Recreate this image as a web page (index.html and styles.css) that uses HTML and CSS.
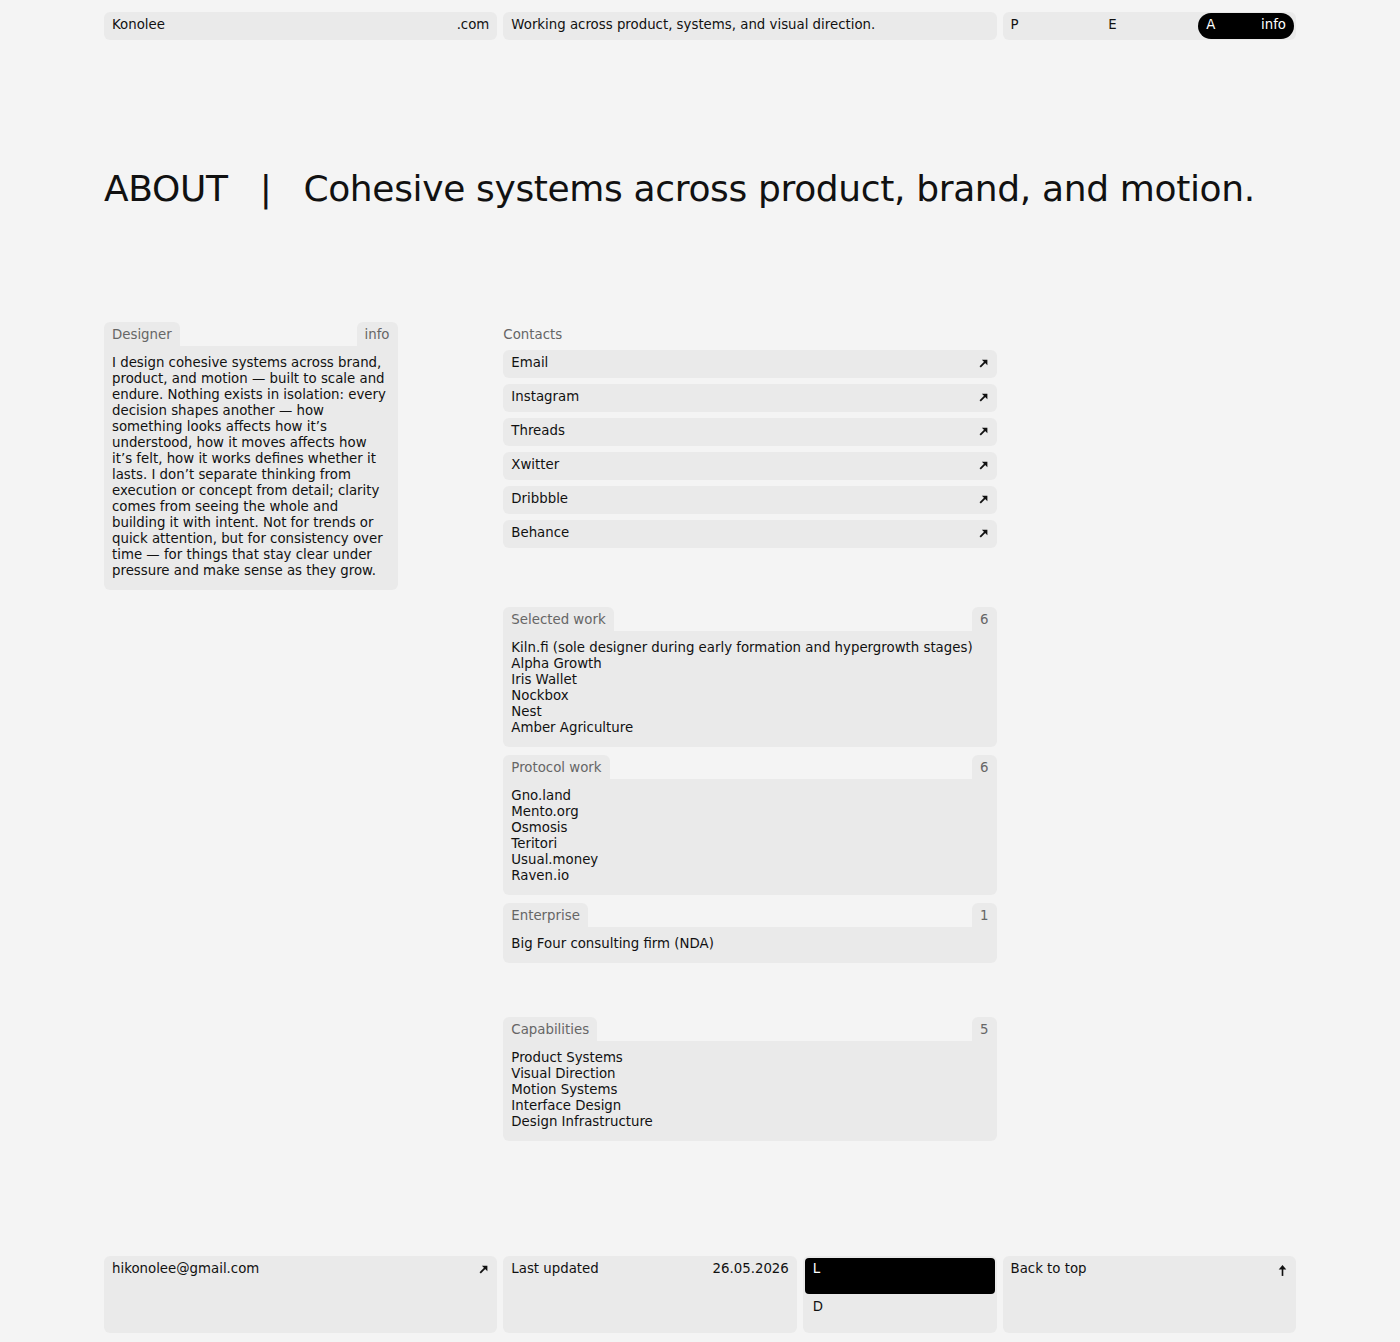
FILE: index.html
```html
<!DOCTYPE html>
<html lang="en">

<head>
    <meta charset="UTF-8" />
    <meta name="viewport" content="width=device-width, initial-scale=1.0" />
    <title>Konolee :: About</title>
    <link rel="stylesheet" href="styles.css">
</head>

<body>
    <div class="page">
        <header class="top-bar">
            <div class="bar-item span-4">
                <span>Konolee</span>
                <span>.com</span>
            </div>
            <div class="bar-item span-5">
                <span>Working across product, systems, and visual direction.</span>
            </div>
            <nav class="bar-nav span-3">
                <a class="nav-item" href="#">P</a>
                <a class="nav-item" href="#">E</a>
                <a class="nav-item active" href="#"><span>A</span><span>info</span></a>
            </nav>
        </header>

        <h1 class="headline">
            <span>ABOUT</span>
            <span>|</span>
            <span>Cohesive systems across product, brand, and motion.</span>
        </h1>

        <main class="main-grid">
            <section class="card span-3">
                <div class="card-head">
                    <span class="tab">Designer</span>
                    <span class="tab">info</span>
                </div>
                <div class="card-body">
                    I design cohesive systems across brand, product, and motion — built to scale and endure. Nothing exists in isolation: every decision shapes another — how something looks affects how it’s understood, how it moves affects how it’s felt, how it works defines whether it lasts. I don’t separate thinking from execution or concept from detail; clarity comes from seeing the whole and building it with intent. Not for trends or quick attention, but for consistency over time — for things that stay clear under pressure and make sense as they grow.
                </div>
            </section>

            <div class="right-col">
                <section class="contacts">
                    <div class="section-label">Contacts</div>
                    <div class="contact-list">
                        <a class="contact-row" href="#"><span>Email</span><svg class="arrow" viewBox="0 0 10 10"><path d="M2 8 L7 3" /><path class="head" d="M3.5 1.5 H8.5 V6.5 Z" /></svg></a>
                        <a class="contact-row" href="#"><span>Instagram</span><svg class="arrow" viewBox="0 0 10 10"><path d="M2 8 L7 3" /><path class="head" d="M3.5 1.5 H8.5 V6.5 Z" /></svg></a>
                        <a class="contact-row" href="#"><span>Threads</span><svg class="arrow" viewBox="0 0 10 10"><path d="M2 8 L7 3" /><path class="head" d="M3.5 1.5 H8.5 V6.5 Z" /></svg></a>
                        <a class="contact-row" href="#"><span>Xwitter</span><svg class="arrow" viewBox="0 0 10 10"><path d="M2 8 L7 3" /><path class="head" d="M3.5 1.5 H8.5 V6.5 Z" /></svg></a>
                        <a class="contact-row" href="#"><span>Dribbble</span><svg class="arrow" viewBox="0 0 10 10"><path d="M2 8 L7 3" /><path class="head" d="M3.5 1.5 H8.5 V6.5 Z" /></svg></a>
                        <a class="contact-row" href="#"><span>Behance</span><svg class="arrow" viewBox="0 0 10 10"><path d="M2 8 L7 3" /><path class="head" d="M3.5 1.5 H8.5 V6.5 Z" /></svg></a>
                    </div>
                </section>

                <div class="work-group">
                    <section class="card">
                        <div class="card-head">
                            <span class="tab">Selected work</span>
                            <span class="tab">6</span>
                        </div>
                        <div class="card-body">
                            Kiln.fi (sole designer during early formation and hypergrowth stages)<br />
                            Alpha Growth<br />
                            Iris Wallet<br />
                            Nockbox<br />
                            Nest<br />
                            Amber Agriculture
                        </div>
                    </section>
                    <section class="card">
                        <div class="card-head">
                            <span class="tab">Protocol work</span>
                            <span class="tab">6</span>
                        </div>
                        <div class="card-body">
                            Gno.land<br />
                            Mento.org<br />
                            Osmosis<br />
                            Teritori<br />
                            Usual.money<br />
                            Raven.io
                        </div>
                    </section>
                    <section class="card">
                        <div class="card-head">
                            <span class="tab">Enterprise</span>
                            <span class="tab">1</span>
                        </div>
                        <div class="card-body">
                            Big Four consulting firm (NDA)
                        </div>
                    </section>
                </div>

                <section class="card capabilities">
                    <div class="card-head">
                        <span class="tab">Capabilities</span>
                        <span class="tab">5</span>
                    </div>
                    <div class="card-body">
                        Product Systems<br />
                        Visual Direction<br />
                        Motion Systems<br />
                        Interface Design<br />
                        Design Infrastructure
                    </div>
                </section>
            </div>
        </main>

        <footer class="footer">
            <a class="foot-card span-4" href="#">
                <span>hikonolee@gmail.com</span>
                <svg class="arrow" viewBox="0 0 10 10"><path d="M2 8 L7 3" /><path class="head" d="M3.5 1.5 H8.5 V6.5 Z" /></svg>
            </a>
            <div class="foot-card span-3">
                <span>Last updated</span>
                <span>26.05.2026</span>
            </div>
            <div class="theme-card span-2">
                <button class="theme-btn active">L</button>
                <button class="theme-btn">D</button>
            </div>
            <a class="foot-card span-3" href="#">
                <span>Back to top</span>
                <svg class="arrow-up" viewBox="0 0 10 12"><path d="M5 11 V3" /><path class="head" d="M1.5 5 L5 1 L8.5 5 Z" /></svg>
            </a>
        </footer>
    </div>
</body>

</html>
```

FILE: styles.css
```css
* {
    margin: 0;
    padding: 0;
    box-sizing: border-box;
}

body {
    background-color: #f4f4f4;
    color: #111;
    font-family: "DejaVu Sans", "Noto Sans", sans-serif;
    font-size: 13.33px;
    line-height: 16px;
}

a {
    color: inherit;
    text-decoration: none;
}

.page {
    width: 1192px;
    margin: 0 auto;
    padding: 12px 0 9px;
}

.span-2 {
    grid-column: span 2;
}

.span-3 {
    grid-column: span 3;
}

.span-4 {
    grid-column: span 4;
}

.span-5 {
    grid-column: span 5;
}

/* top bar */
.top-bar {
    display: grid;
    grid-template-columns: repeat(12, 1fr);
    gap: 6px;
}

.bar-item {
    background-color: #eaeaea;
    border-radius: 6px;
    height: 28px;
    padding: 5px 8px 7px;
    display: flex;
    justify-content: space-between;
}

.bar-nav {
    background-color: #eaeaea;
    border-radius: 6px;
    height: 28px;
    display: grid;
    grid-template-columns: repeat(3, 1fr);
}

.nav-item {
    padding: 5px 8px 7px;
    display: flex;
    justify-content: space-between;
}

.nav-item.active {
    background-color: #000;
    color: #fff;
    border-radius: 14px;
    margin: 1px 2px 1px 0;
    padding: 4px 8px 6px;
}

/* headline */
.headline {
    margin-top: 127px;
    font-size: 36px;
    line-height: 44px;
    font-weight: 400;
    letter-spacing: -0.35px;
    display: flex;
    gap: 32px;
}

/* main */
.main-grid {
    margin-top: 111px;
    display: grid;
    grid-template-columns: repeat(12, 1fr);
    gap: 6px;
    align-items: start;
}

.right-col {
    grid-column: 5 / span 5;
    display: flex;
    flex-direction: column;
}

.card-head {
    display: flex;
    justify-content: space-between;
    height: 24px;
}

.tab {
    background-color: #eaeaea;
    color: #666;
    border-radius: 6px 6px 0 0;
    padding: 1px 8px 0;
    line-height: 23px;
}

.card-body {
    background-color: #eaeaea;
    border-radius: 0 0 6px 6px;
    padding: 9px 8px 11px;
}

.section-label {
    color: #666;
    padding-top: 1px;
    line-height: 23px;
    margin-bottom: 4px;
}

.contact-list {
    display: flex;
    flex-direction: column;
    gap: 6px;
}

.contact-row {
    background-color: #eaeaea;
    border-radius: 6px;
    height: 28px;
    padding: 5px 8px 7px 8px;
    display: flex;
    justify-content: space-between;
    align-items: flex-start;
}

.contact-row .arrow {
    margin-top: 3px;
}

.arrow {
    width: 11px;
    height: 11px;
    fill: none;
    stroke: #111;
    stroke-width: 1.6;
}

.arrow-up {
    width: 11px;
    height: 13px;
    fill: none;
    stroke: #111;
    stroke-width: 1.5;
}

.arrow .head,
.arrow-up .head {
    fill: #111;
    stroke: none;
}

.work-group {
    margin-top: 59px;
    display: flex;
    flex-direction: column;
    gap: 8px;
}

.capabilities {
    margin-top: 54px;
}

/* footer */
.footer {
    margin-top: 115px;
    display: grid;
    grid-template-columns: repeat(12, 1fr);
    gap: 6px;
    height: 77px;
}

.foot-card {
    background-color: #eaeaea;
    border-radius: 6px;
    padding: 5px 8px;
    display: flex;
    justify-content: space-between;
    align-items: flex-start;
}

.foot-card .arrow,
.foot-card .arrow-up {
    margin-top: 3px;
}

.theme-card {
    background-color: #eaeaea;
    border-radius: 6px;
    padding: 2px;
    display: flex;
    flex-direction: column;
    gap: 2px;
}

.theme-btn {
    flex: 1;
    border: none;
    background: none;
    text-align: left;
    font-family: inherit;
    font-size: 13.33px;
    line-height: 16px;
    color: #111;
    padding: 3px 8px;
    display: flex;
    align-items: flex-start;
    border-radius: 4px;
}

.theme-btn.active {
    background-color: #000;
    color: #fff;
}
```
